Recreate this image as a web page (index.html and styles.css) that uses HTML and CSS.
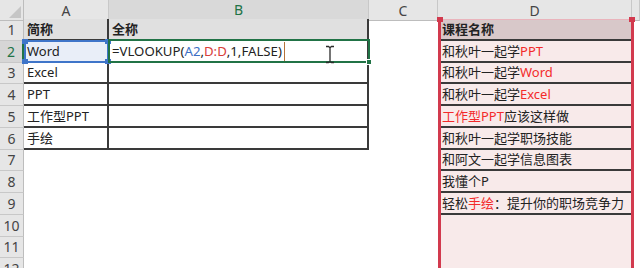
FILE: index.html
```html
<!DOCTYPE html>
<html lang="zh">
<head>
    <meta charset="utf-8">
    <title>VLOOKUP</title>
    <link rel="stylesheet" href="styles.css">
</head>
<body>
    <div class="sheet">
        <!-- column letters -->
        <div class="row top">
            <div class="corner"></div>
            <div class="col">A</div>
            <div class="col on">B</div>
            <div class="col">C</div>
            <div class="col">D</div>
            <div class="col"></div>
        </div>

        <div class="row">
            <div class="num">1</div>
            <div class="cell tb hd">简称</div>
            <div class="cell tb hd">全称</div>
            <div class="cell"></div>
            <div class="cell d ln hd">课程名称</div>
            <div class="cell"></div>
        </div>
        <div class="row">
            <div class="num on">2</div>
            <div class="cell tb refd">Word</div>
            <div class="cell tb formula">=VLOOKUP(<span class="blue">A2</span>,<span class="red">D:D</span>,1,FALSE)</div>
            <div class="cell"></div>
            <div class="cell d ln">和秋叶一起学<span class="r">PPT</span></div>
            <div class="cell"></div>
        </div>
        <div class="row">
            <div class="num">3</div>
            <div class="cell tb">Excel</div>
            <div class="cell tb"></div>
            <div class="cell"></div>
            <div class="cell d ln">和秋叶一起学<span class="r">Word</span></div>
            <div class="cell"></div>
        </div>
        <div class="row">
            <div class="num">4</div>
            <div class="cell tb">PPT</div>
            <div class="cell tb"></div>
            <div class="cell"></div>
            <div class="cell d ln">和秋叶一起学<span class="r">Excel</span></div>
            <div class="cell"></div>
        </div>
        <div class="row">
            <div class="num">5</div>
            <div class="cell tb">工作型PPT</div>
            <div class="cell tb"></div>
            <div class="cell"></div>
            <div class="cell d ln"><span class="r">工作型PPT</span>应该这样做</div>
            <div class="cell"></div>
        </div>
        <div class="row">
            <div class="num">6</div>
            <div class="cell tb">手绘</div>
            <div class="cell tb"></div>
            <div class="cell"></div>
            <div class="cell d ln">和秋叶一起学职场技能</div>
            <div class="cell"></div>
        </div>
        <div class="row">
            <div class="num">7</div>
            <div class="cell"></div>
            <div class="cell"></div>
            <div class="cell"></div>
            <div class="cell d ln">和阿文一起学信息图表</div>
            <div class="cell"></div>
        </div>
        <div class="row">
            <div class="num">8</div>
            <div class="cell"></div>
            <div class="cell"></div>
            <div class="cell"></div>
            <div class="cell d ln">我懂个P</div>
            <div class="cell"></div>
        </div>
        <div class="row">
            <div class="num">9</div>
            <div class="cell"></div>
            <div class="cell"></div>
            <div class="cell"></div>
            <div class="cell d ln">轻松<span class="r">手绘</span>：提升你的职场竞争力</div>
            <div class="cell"></div>
        </div>
        <div class="row">
            <div class="num">10</div>
            <div class="cell"></div>
            <div class="cell"></div>
            <div class="cell"></div>
            <div class="cell d"></div>
            <div class="cell"></div>
        </div>
        <div class="row">
            <div class="num">11</div>
            <div class="cell"></div>
            <div class="cell"></div>
            <div class="cell"></div>
            <div class="cell d"></div>
            <div class="cell"></div>
        </div>
        <div class="row">
            <div class="num">12</div>
            <div class="cell"></div>
            <div class="cell"></div>
            <div class="cell"></div>
            <div class="cell d"></div>
            <div class="cell"></div>
        </div>

        <!-- range highlights drawn over the grid -->
        <div class="ref-a">
            <i class="h tl"></i><i class="h tr"></i><i class="h bl"></i><i class="h br"></i>
        </div>
        <div class="ref-d">
            <i class="h tl"></i><i class="h tr"></i>
        </div>
        <div class="active"><i class="handle"></i></div>

        <div class="caret"></div>
        <svg class="ibeam" width="10" height="19" viewBox="0 0 10 19">
            <path d="M1 1.5h2.5l1.5 1.2 1.5-1.2H9M5 2.7v13.6M1 17.5h2.5l1.5-1.2 1.5 1.2H9" fill="none" stroke="#2b2b2b" stroke-width="1.3"/>
        </svg>
    </div>
</body>
</html>
```

FILE: styles.css
```css
* {
    margin: 0;
    padding: 0;
    box-sizing: border-box;
}

body {
    width: 640px;
    height: 268px;
    overflow: hidden;
    background: #fff;
    font-family: "Noto Sans", "Noto Sans CJK SC", sans-serif;
    font-size: 13px;
    color: #222;
}

.sheet {
    position: relative;
    display: flex;
    flex-direction: column;
    height: 268px;
    overflow: hidden;
}

.row {
    display: grid;
    grid-template-columns: 24px 85px 260px 69px 194px 1fr;
    height: 21.75px;
    flex: none;
}

.row.top {
    height: 19px;
}

/* headers */
.corner {
    position: relative;
    background: #e6e6e6;
    border-right: 1px solid #bdbdbd;
    border-bottom: 1px solid #bdbdbd;
}

.corner::after {
    content: "";
    position: absolute;
    right: 2px;
    bottom: 2px;
    border-left: 12px solid transparent;
    border-bottom: 12px solid #c6c6c6;
}

.col {
    display: flex;
    align-items: center;
    justify-content: center;
    background: #e6e6e6;
    border-right: 1px solid #c8c8c8;
    border-bottom: 1px solid #bdbdbd;
    color: #444;
    font-size: 14px;
}

.col.on {
    background: #d9d9d9;
    color: #217346;
    border-bottom: 2px solid #217346;
}

.num {
    display: flex;
    align-items: center;
    justify-content: center;
    background: #e6e6e6;
    border-right: 1px solid #bdbdbd;
    border-bottom: 1px solid #c8c8c8;
    color: #444;
    font-size: 14px;
}

.num.on {
    background: #d6d6d6;
    color: #217346;
    border-right: 2px solid #217346;
}

/* cells */
.cell {
    display: flex;
    align-items: flex-end;
    padding: 0 3px 1px;
    white-space: nowrap;
    line-height: 18px;
}

.tb {
    border-right: 2px solid #3a3a3a;
    border-bottom: 2px solid #3a3a3a;
}

.hd {
    background: #e0e0e0;
    font-weight: bold;
}

.refd {
    background: #e9eef8;
}

.formula {
    font-size: 13.2px;
}

.formula .blue {
    color: #3c6fc4;
}

.formula .red {
    color: #d8403a;
}

.d {
    background: #f8eaea;
    padding-left: 4px;
}

.d.hd {
    background: #d8c8c9;
}

.d.ln {
    border-bottom: 2px solid #3a3a3a;
}

.r {
    color: #f32a2a;
}

/* range outlines */
.ref-a {
    position: absolute;
    left: 24px;
    top: 40px;
    width: 85px;
    height: 23px;
    border: 2px solid #3f75c9;
}

.ref-a .h {
    background: #3f75c9;
}

.ref-d {
    position: absolute;
    left: 438px;
    top: 19px;
    width: 196px;
    bottom: 0;
    border-left: 3px solid #d23a4e;
    border-right: 3px solid #d23a4e;
    border-top: 1px solid #eab4bc;
}

.ref-d .h {
    background: #d23a4e;
}

.h {
    position: absolute;
    width: 6px;
    height: 5px;
}

.h.tl { left: -4px; top: -3px; }
.h.tr { right: -4px; top: -3px; }
.h.bl { left: -4px; bottom: -3px; }
.h.br { right: -4px; bottom: -3px; }

.active {
    position: absolute;
    left: 108px;
    top: 39px;
    width: 262px;
    height: 24px;
    border: 2px solid #217346;
}

.active .handle {
    position: absolute;
    right: -4px;
    bottom: -4px;
    width: 6px;
    height: 6px;
    background: #217346;
    border: 1px solid #fff;
}

.caret {
    position: absolute;
    left: 284px;
    top: 42px;
    width: 1px;
    height: 19px;
    background: #b4733b;
}

.ibeam {
    position: absolute;
    left: 325px;
    top: 45px;
}
```
